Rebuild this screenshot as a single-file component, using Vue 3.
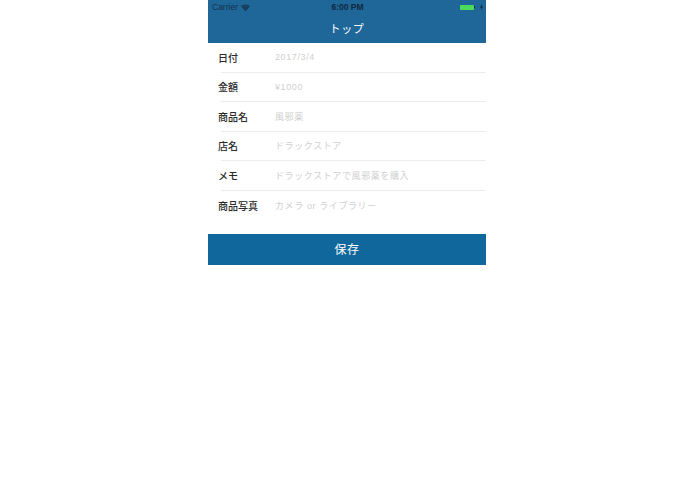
<script setup>
const rows = [
  { label: '日付', value: '2017/3/4' },
  { label: '金額', value: '¥1000' },
  { label: '商品名', value: '風邪薬' },
  { label: '店名', value: 'ドラックストア' },
  { label: 'メモ', value: 'ドラックストアで風邪薬を購入' },
  { label: '商品写真', value: 'カメラ or ライブラリー' },
]
</script>

<template>
  <div class="page">
    <div class="phone">
      <header class="nav">
        <div class="status">
          <div class="status-left">
            <span>Carrier</span>
            <svg class="wifi" width="9" height="7" viewBox="0 0 9 7">
              <path d="M4.5 7 L0 2 Q4.5 -1 9 2 Z" fill="#14324b" />
              <path d="M1.5 2.6 Q4.5 0.8 7.5 2.6" stroke="#1f6699" stroke-width="0.7" fill="none" />
              <path d="M3 4.3 Q4.5 3.3 6 4.3" stroke="#1f6699" stroke-width="0.7" fill="none" />
            </svg>
          </div>
          <span class="time">6:00 PM</span>
          <div class="status-right">
            <span class="battery"></span>
            <span class="nub"></span>
            <svg width="3" height="6" viewBox="0 0 3 6" class="bolt">
              <path d="M2 0 L0 3.4 H1.2 L1 6 L3 2.4 H1.7 Z" fill="#12293d" />
            </svg>
          </div>
        </div>
        <div class="title">トップ</div>
      </header>
      <div class="form">
        <div v-for="row in rows" :key="row.label" class="row">
          <span class="label">{{ row.label }}</span>
          <span class="value">{{ row.value }}</span>
        </div>
      </div>
      <button class="save">保存</button>
    </div>
  </div>
</template>

<style scoped>
.page {
  display: flex;
  justify-content: center;
  width: 695px;
  height: 494px;
  background: #fff;
  font-family: "Liberation Sans", "Noto Sans CJK JP", sans-serif;
  padding-right: 1px;
  box-sizing: border-box;
}
.phone {
  width: 278px;
  display: flex;
  flex-direction: column;
}
.nav {
  height: 43px;
  background: #1f6699;
  display: flex;
  flex-direction: column;
}
.status {
  height: 14px;
  display: grid;
  grid-template-columns: 1fr auto 1fr;
  align-items: center;
  padding: 0 3px 0 4px;
  font-size: 8.5px;
  color: #14324b;
}
.status-left {
  display: flex;
  align-items: center;
  gap: 3px;
  color: #14324b;
}
.time {
  font-weight: 700;
  color: #12293d;
}
.status-right {
  display: flex;
  align-items: center;
  justify-content: flex-end;
}
.battery {
  width: 14px;
  height: 5px;
  background: #4cdc5c;
  border-radius: 1px;
}
.nub {
  width: 1px;
  height: 2px;
  background: #12293d;
  margin-right: 5px;
}
.title {
  flex: 1;
  display: flex;
  align-items: center;
  justify-content: center;
  padding-bottom: 2px;
  font-family: "Noto Sans CJK JP", sans-serif;
  font-size: 11px;
  letter-spacing: 0.6px;
  color: #fff;
}
.form {
  display: flex;
  flex-direction: column;
  padding-left: 13px;
}
.row {
  height: 29.5px;
  box-sizing: border-box;
  display: flex;
  align-items: center;
  border-bottom: 1px solid #ececec;
}
.row:last-child {
  border-bottom: none;
}
.label {
  width: 57px;
  margin-left: -3px;
  font-family: "Noto Sans CJK JP", sans-serif;
  font-size: 10px;
  font-weight: 500;
  color: #2a2a2a;
}
.value {
  font-family: "Liberation Sans", "Noto Sans CJK JP", sans-serif;
  font-size: 9px;
  letter-spacing: 0.6px;
  color: #cfcfcf;
}
.save {
  margin-top: 14px;
  height: 31px;
  border: none;
  padding: 0 0 2px;
  background: #0f679c;
  color: #fff;
  font-family: "Noto Sans CJK JP", sans-serif;
  font-size: 12px;
  letter-spacing: 0.5px;
}
</style>
